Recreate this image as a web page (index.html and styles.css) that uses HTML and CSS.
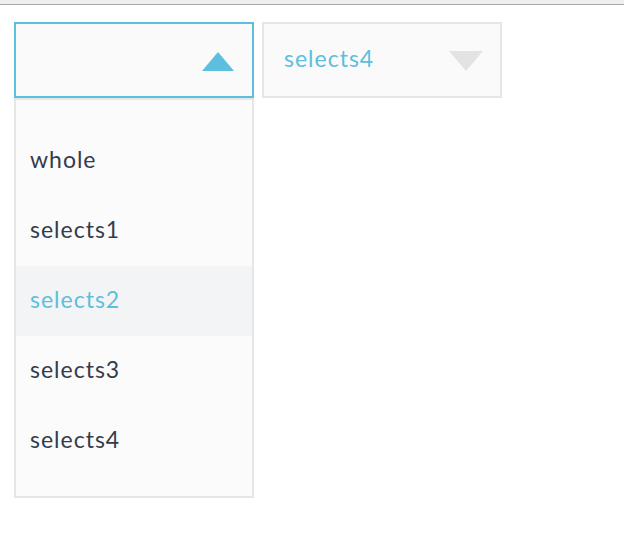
FILE: index.html
```html
<!DOCTYPE html>
<html>
<head>
<meta charset="utf-8">
<link rel="stylesheet" href="styles.css">
</head>
<body>
<div class="topbar"></div>
<div class="page">
  <div class="select-wrap">
    <div class="trigger open">
      <span class="value"></span>
      <svg class="caret" width="32" height="19" viewBox="0 0 32 19"><polygon points="16,0 32,19 0,19" fill="#5dbfdd"/></svg>
    </div>
    <ul class="options">
      <li class="option">whole</li>
      <li class="option">selects1</li>
      <li class="option active">selects2</li>
      <li class="option">selects3</li>
      <li class="option">selects4</li>
    </ul>
  </div>
  <div class="select-wrap">
    <div class="trigger">
      <span class="value selected">selects4</span>
      <svg class="caret" width="34" height="20" viewBox="0 0 34 20"><polygon points="0,0 34,0 17,20" fill="#e3e3e3"/></svg>
    </div>
  </div>
</div>
</body>
</html>
```

FILE: styles.css
```css
html, body {
  margin: 0;
  padding: 0;
  background: #ffffff;
  font-family: "Lato", "Noto Sans", sans-serif;
}
.topbar {
  height: 4px;
  background: #efefef;
  border-bottom: 1px solid #a8a8a8;
}
.page {
  display: flex;
  align-items: flex-start;
  gap: 8px;
  padding: 17px 0 0 14px;
}
.select-wrap {
  width: 240px;
  display: flex;
  flex-direction: column;
}
.trigger {
  box-sizing: border-box;
  height: 76px;
  border: 2px solid #e6e6e6;
  background: #fafafa;
  display: flex;
  align-items: center;
  justify-content: space-between;
  padding: 0 17px 0 20px;
}
.trigger.open {
  border-color: #5dbfdd;
  padding-right: 18px;
}
.value {
  font-size: 23px;
  letter-spacing: 1px;
  color: #5dbfdd;
  margin-top: -4px;
}
.caret {
  display: block;
  margin-top: 2px;
}
.options {
  list-style: none;
  margin: 0;
  padding: 26px 0 20px;
  border: 2px solid #e6e6e6;
  background: #fbfbfb;
}
.option {
  height: 70px;
  line-height: 66px;
  padding-bottom: 4px;
  box-sizing: border-box;
  padding-left: 14px;
  font-size: 23px;
  letter-spacing: 1px;
  color: #333c4c;
}
.option.active {
  background: #f3f4f6;
  color: #5dbfdd;
}
```
